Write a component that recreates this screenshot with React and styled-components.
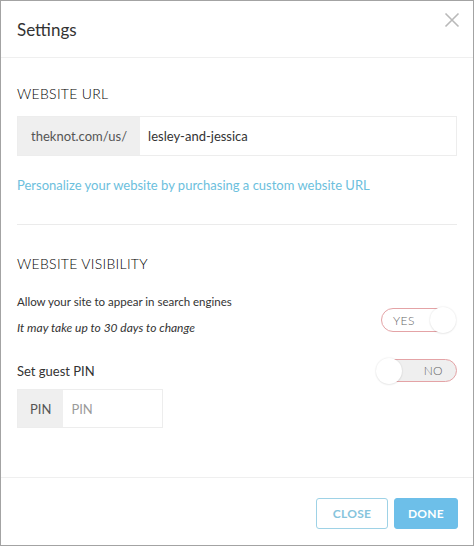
import styled, { createGlobalStyle } from "styled-components";

const GlobalStyle = createGlobalStyle`
  body {
    margin: 0;
    background: #ffffff;
    font-family: "Lato", "Liberation Sans", sans-serif;
    color: #333333;
  }
  * {
    box-sizing: border-box;
  }
`;

const Modal = styled.div`
  width: 474px;
  height: 546px;
  border: 1px solid #a3a3a3;
  background: #ffffff;
  display: flex;
  flex-direction: column;
`;

const Header = styled.header`
  height: 57px;
  border-bottom: 1px solid #efefef;
  display: flex;
  justify-content: space-between;
  align-items: flex-start;
  padding: 18px 13px 0 16px;
`;

const Title = styled.h2`
  margin: 0;
  font-size: 17px;
  font-weight: 400;
  line-height: 22px;
  color: #333333;
`;

const CloseIcon = styled.button`
  border: 0;
  background: none;
  padding: 0;
  margin-top: -7px;
  width: 16px;
  height: 16px;
  display: flex;
  cursor: pointer;
`;

const Body = styled.div`
  flex: 1;
  padding: 0 16px;
`;

const Section = styled.section`
  padding: ${(p) => p.$top}px 0 0;
`;

const SectionTitle = styled.h3`
  margin: 0;
  font-size: 14px;
  font-weight: 300;
  line-height: 20px;
  letter-spacing: 0.3px;
  color: #000000;
`;

const InputGroup = styled.div`
  display: flex;
  width: ${(p) => p.$width};
  height: ${(p) => p.$height}px;
  margin-top: ${(p) => p.$top}px;
  border: 1px solid #ededed;
`;

const Addon = styled.span`
  display: flex;
  align-items: center;
  padding: 0 ${(p) => p.$pad}px;
  background: #efefef;
  font-size: 13px;
  color: #555555;
`;

const TextInput = styled.input`
  flex: 1;
  min-width: 0;
  border: 0;
  outline: none;
  padding: 0 8px;
  font-family: inherit;
  font-size: 13px;
  color: #333333;
  background: #ffffff;
  &::placeholder {
    color: #9a9a9a;
  }
`;

const Link = styled.a`
  display: block;
  margin-top: 20px;
  font-size: 13px;
  line-height: 18px;
  color: #6cc0dd;
  text-decoration: none;
`;

const Divider = styled.hr`
  margin: 30px 0 0;
  border: 0;
  border-top: 1px solid #ebebeb;
`;

const Row = styled.div`
  display: flex;
  justify-content: space-between;
  align-items: ${(p) => p.$align || "center"};
  margin-top: ${(p) => p.$top}px;
`;

const Label = styled.p`
  margin: 0;
  font-size: ${(p) => p.$size || 11.5}px;
  line-height: 18px;
  font-style: ${(p) => (p.$italic ? "italic" : "normal")};
  color: #333333;
  & + & {
    margin-top: 8px;
  }
`;

const Toggle = styled.div`
  position: relative;
  width: ${(p) => p.$width}px;
  height: ${(p) => p.$height}px;
  margin-top: ${(p) => p.$top || 0}px;
  margin-right: ${(p) => p.$right || 0}px;
  border: 1px solid #e4a3a6;
  border-radius: 13px;
  background: ${(p) => (p.$on ? "#ffffff" : "#efefef")};
  display: flex;
  align-items: center;
  justify-content: ${(p) => (p.$on ? "flex-start" : "flex-end")};
  padding: 0 ${(p) => (p.$on ? 0 : 13)}px 0 ${(p) => (p.$on ? 11 : 0)}px;
  font-size: 12px;
  font-weight: 300;
  color: #666666;
  letter-spacing: 0.4px;
`;

const Knob = styled.span`
  position: absolute;
  top: -2px;
  ${(p) => (p.$on ? "right: -2px;" : "left: -2px;")}
  width: 26px;
  height: 26px;
  border-radius: 50%;
  background: #ffffff;
  box-shadow: 0 0 2px rgba(0, 0, 0, 0.12), 0 1px 2px rgba(0, 0, 0, 0.06);
`;

const Footer = styled.footer`
  height: 68px;
  border-top: 1px solid #efefef;
  display: flex;
  justify-content: flex-end;
  align-items: flex-start;
  gap: 6px;
  padding: 20px 15px 0 0;
`;

const Button = styled.button`
  height: 31px;
  width: ${(p) => p.$width}px;
  border-radius: 3px;
  border: 1px solid ${(p) => (p.$primary ? "#6dbfe9" : "#9ed2e6")};
  background: ${(p) => (p.$primary ? "#6dbfe9" : "#ffffff")};
  color: ${(p) => (p.$primary ? "#ffffff" : "#86c4dc")};
  font-family: inherit;
  font-size: 12px;
  font-weight: 700;
  letter-spacing: 0.3px;
  cursor: pointer;
`;

const App = () => {
  return (
    <>
      <GlobalStyle />
      <Modal>
        <Header>
          <Title>Settings</Title>
          <CloseIcon aria-label="Close">
            <svg width="16" height="16" viewBox="0 0 16 16">
              <path d="M1.5 1.5 L14.5 14.5 M14.5 1.5 L1.5 14.5" stroke="#b9b9b9" strokeWidth="1.6" fill="none" />
            </svg>
          </CloseIcon>
        </Header>
        <Body>
          <Section $top={26}>
            <SectionTitle>WEBSITE URL</SectionTitle>
            <InputGroup $width="100%" $height={40} $top={12}>
              <Addon $pad={13}>theknot.com/us/</Addon>
              <TextInput defaultValue="lesley-and-jessica" />
            </InputGroup>
            <Link href="#">Personalize your website by purchasing a custom website URL</Link>
            <Divider />
          </Section>
          <Section $top={29}>
            <SectionTitle>WEBSITE VISIBILITY</SectionTitle>
            <Row $align="flex-start" $top={19}>
              <div>
                <Label>Allow your site to appear in search engines</Label>
                <Label $italic $size={12}>It may take up to 30 days to change</Label>
              </div>
              <Toggle $on $width={74} $height={24} $top={15} $right={2}>
                YES
                <Knob $on />
              </Toggle>
            </Row>
            <Row $top={22}>
              <Label $size={13}>Set guest PIN</Label>
              <Toggle $width={80} $height={23}>
                NO
                <Knob />
              </Toggle>
            </Row>
            <InputGroup $width="146px" $height={39} $top={7}>
              <Addon $pad={12}>PIN</Addon>
              <TextInput placeholder="PIN" />
            </InputGroup>
          </Section>
        </Body>
        <Footer>
          <Button $width={72}>CLOSE</Button>
          <Button $primary $width={64}>DONE</Button>
        </Footer>
      </Modal>
    </>
  );
};

export default App;
